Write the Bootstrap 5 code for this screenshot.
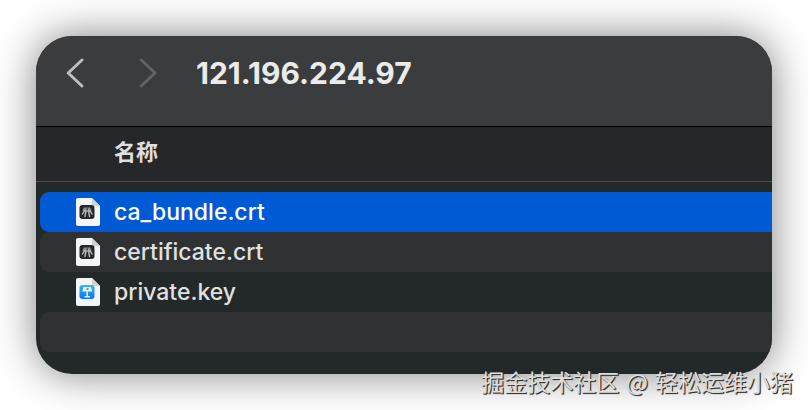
<!DOCTYPE html>
<html lang="zh-CN">
<head>
<meta charset="utf-8">
<meta name="viewport" content="width=device-width, initial-scale=1">
<title>121.196.224.97</title>
<link href="https://cdn.jsdelivr.net/npm/bootstrap@5.3.0/dist/css/bootstrap.min.css" rel="stylesheet">
<style>
  body { background: #fff; font-family: Inter, "Noto Sans CJK SC", sans-serif; }
  .stage { padding: 36px; }
  .finder { background: #232828; border-radius: 36px; box-shadow: 0 0 42px rgba(0, 0, 0, .5); padding-bottom: 22px; }
  .toolbar { background: #3b3c3d; border-bottom: 1px solid #000; height: 91px; padding: 0 28px 16px; }
  .nav-arrow { width: 24px; height: 32px; color: #bcbdbd; }
  .nav-arrow:disabled { color: #626364; opacity: 1; border: 0; }
  .nav-group { gap: 48px; margin-right: 36px; }
  .folder-title { color: #ebebeb; font-size: 30px; line-height: 36px; font-weight: 700; }
  .files th { background: #262729; color: #dededf; border-bottom: 1px solid #4a4c4d; height: 54px; padding: 0 0 3px 78px; font-size: 22px; line-height: 32px; font-weight: 700; }
  .files td { padding: 0 0 0 4px; }
  .files tbody::before { content: ""; display: block; height: 10px; }
  .file-row { height: 40px; padding-left: 35px; gap: 13px; border-radius: 9px 0 0 9px; color: #e0e1e1; font-size: 23px; line-height: 32px; font-weight: 500; }
  .file-row.striped { background: #303132; }
  .file-row.selected { background: #005ad4; color: #fff; }
  .watermark { position: absolute; right: 15px; bottom: 12px; gap: 7px; color: #dedede; font-family: "Noto Sans CJK SC", sans-serif; font-size: 23px; line-height: 34px; text-shadow: 1px 1px 1px #333, 1px 1px 0 #555; }
</style>
<script src="https://cdn.jsdelivr.net/npm/bootstrap@5.3.0/dist/js/bootstrap.bundle.min.js"></script>
</head>
<body>
<svg class="position-absolute" width="0" height="0" aria-hidden="true">
  <defs><linearGradient id="sky" x1="0" y1="0" x2="0" y2="1"><stop stop-color="#35b5fa"/><stop offset="1" stop-color="#1474ee"/></linearGradient></defs>
  <symbol id="page" viewBox="0 0 26 28">
    <path fill="#f4f5f5" d="M3 0h14l8 8v18a2 2 0 0 1-2 2H3a2 2 0 0 1-2-2V2a2 2 0 0 1 2-2z"/>
    <path fill="#d0d3d5" d="M17 0l8 8h-6a2 2 0 0 1-2-2z"/>
  </symbol>
  <symbol id="cert" viewBox="0 0 26 28">
    <use href="#page" width="26" height="28"/>
    <rect x="4.500" y="7" width="15" height="14" rx="3" fill="#28292b"/>
    <path d="M9 9.500h6l1.500 3-2 1.500H9.500l-2-1.500z" fill="#8d8f91"/>
    <path d="M9.500 12.500l-2 3.500M11 12.500l-1 6M13.500 12.500l1 6M15 12.500l2 3.500" fill="none" stroke="#b5b7b9" stroke-width="1.500" stroke-linecap="round"/>
    <path d="M12.200 9.500v3" stroke="#35363a" stroke-width="1"/>
  </symbol>
  <symbol id="keynote" viewBox="0 0 26 28">
    <use href="#page" width="26" height="28"/>
    <rect x="4.500" y="7" width="15" height="14" rx="3" fill="url(#sky)"/>
    <path d="M8.500 9h7.500l1.200 4.500H7.300z" fill="#e7f6ff"/>
    <path d="M11.500 10h2v2h-2z" fill="#64ae78"/>
    <path d="M12.200 13.500v5M9.500 18.700h5.500" stroke="#dff2ff" stroke-width="1.500"/>
  </symbol>
</svg>
<div class="stage position-relative">
  <main class="finder overflow-hidden">
    <header class="toolbar d-flex align-items-center">
      <nav class="nav-group d-flex" aria-label="导航">
        <button type="button" class="nav-arrow btn p-0 border-0 d-flex" aria-label="后退">
          <svg width="24" height="32" fill="none" stroke="currentColor" stroke-width="3" stroke-linecap="round" stroke-linejoin="round"><path d="M18 3L4.200 16 18 29"/></svg>
        </button>
        <button type="button" class="nav-arrow btn p-0 border-0 d-flex" aria-label="前进" disabled>
          <svg width="24" height="32" fill="none" stroke="currentColor" stroke-width="3" stroke-linecap="round" stroke-linejoin="round"><path d="M5.200 3L19 16 5.200 29"/></svg>
        </button>
      </nav>
      <h1 class="folder-title m-0">121.196.224.97</h1>
    </header>
    <table class="files w-100">
      <thead><tr><th scope="col">名称</th></tr></thead>
      <tbody>
        <tr><td><div class="file-row selected d-flex align-items-center"><svg width="26" height="28" aria-hidden="true"><use href="#cert"/></svg>ca_bundle.crt</div></td></tr>
        <tr><td><div class="file-row striped d-flex align-items-center"><svg width="26" height="28" aria-hidden="true"><use href="#cert"/></svg>certificate.crt</div></td></tr>
        <tr><td><div class="file-row d-flex align-items-center"><svg width="26" height="28" aria-hidden="true"><use href="#keynote"/></svg>private.key</div></td></tr>
        <tr><td><div class="file-row striped"></div></td></tr>
      </tbody>
    </table>
  </main>
  <div class="watermark d-flex"><span>掘金技术社区</span><span>@</span><span>轻松运维小猪</span></div>
</div>
</body>
</html>
